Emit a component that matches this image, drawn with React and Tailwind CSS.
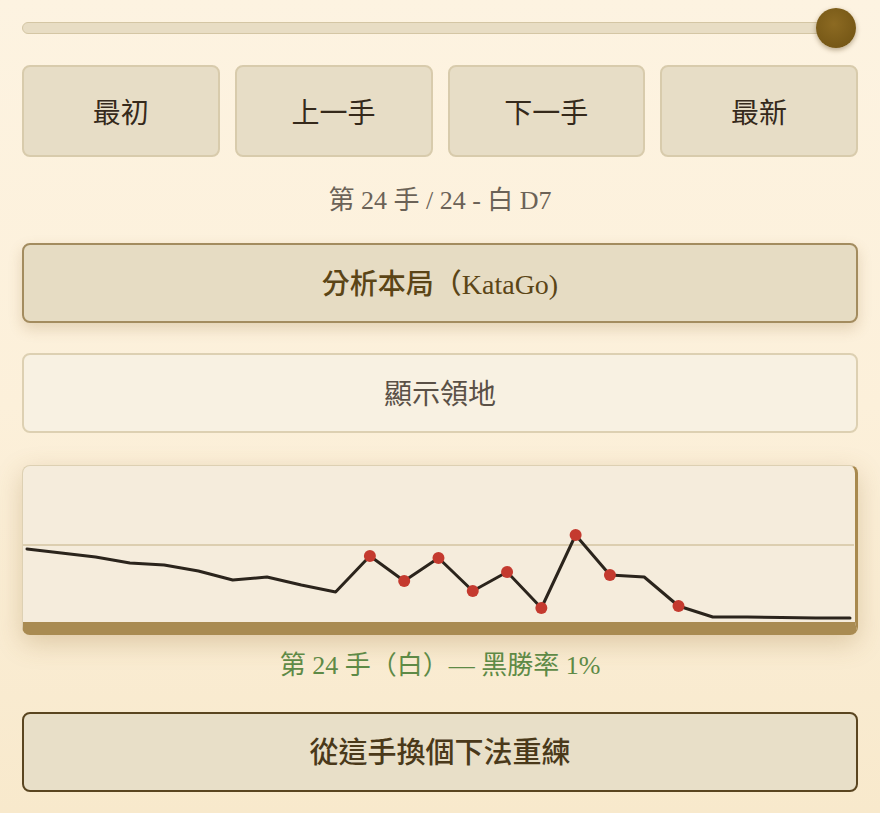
import React from "react";

const FONT = { fontFamily: '"Liberation Serif", "Noto Sans CJK TC", serif' };

const ys = [83, 87, 91, 97, 99, 105, 114, 111, 119, 126, 90, 115, 92, 125, 106, 142, 69, 109, 111, 140, 151, 151, 151.5, 152, 152];
const red = new Set([10, 11, 12, 13, 14, 15, 16, 17, 19]);

function Chart() {
  const pts = ys.map((y, i) => [4 + i * 34.29, y]);
  const d = pts.map((p, i) => (i ? "L" : "M") + p[0].toFixed(1) + " " + p[1]).join(" ");
  return (
    <svg width="831" height="156" viewBox="0 0 831 156" className="block">
      <line x1="0" y1="79" x2="831" y2="79" stroke="#d3c4a2" strokeWidth="1.5" />
      <path d={d} fill="none" stroke="#2b241c" strokeWidth="3" strokeLinejoin="round" strokeLinecap="round" />
      {pts.map((p, i) =>
        red.has(i) ? <circle key={i} cx={p[0]} cy={p[1]} r="6" fill="#c43a2f" /> : null
      )}
    </svg>
  );
}

export default function App() {
  const navs = ["最初", "上一手", "下一手", "最新"];
  return (
    <div
      className="min-h-[813px] w-full px-[22px] pt-[8px] bg-gradient-to-b from-[#fdf3e1] via-[#fcf0da] to-[#f8e9cc]"
      style={FONT}
    >
      {/* slider */}
      <div className="relative h-[40px] flex items-center">
        <div className="h-[12px] w-[828px] rounded-full bg-[#e8ddc4] border border-[#d4c6a4]" />
        <div className="absolute right-[2px] top-0 h-[40px] w-[40px] rounded-full bg-[radial-gradient(circle_at_45%_40%,#8c6a22,#6e5112)] shadow-[0_2px_5px_rgba(80,55,10,0.4)]" />
      </div>

      {/* nav buttons */}
      <div className="mt-[17px] grid grid-cols-4 gap-[15px]">
        {navs.map((t) => (
          <div
            key={t}
            className="h-[92px] pt-[5px] rounded-[8px] bg-[#e7ddc6] border-2 border-[#d8cbac] flex items-center justify-center text-[28px] text-[#35291b]"
          >
            {t}
          </div>
        ))}
      </div>

      <div className="mt-[27px] h-[34px] leading-[34px] text-center text-[26px] text-[#6b6257]">
        第 24 手 / 24 - 白 D7
      </div>

      <div className="mt-[25px] h-[80px] pt-[4px] rounded-[8px] bg-[#e6dcc3] border-2 border-[#a38c5f] shadow-[0_6px_14px_rgba(140,105,45,0.22)] flex items-center justify-center text-[28px] font-medium text-[#5b4516]">
        分析本局（KataGo)
      </div>

      <div className="mt-[30px] h-[80px] pt-[4px] rounded-[8px] bg-[#f8f1e2] border-2 border-[#ddd0b2] flex items-center justify-center text-[28px] text-[#5a5046]">
        顯示領地
      </div>

      <div className="mt-[32px] h-[170px] rounded-[8px] bg-[#f5ecdc] border-t border-l border-[#ddd0b3] border-r-[3px] border-r-[#a8894e] border-b-[13px] border-b-[#a98b52] shadow-[0_8px_26px_rgba(150,110,50,0.28)] overflow-hidden">
        <Chart />
      </div>

      <div className="mt-[14px] h-[34px] leading-[34px] text-center text-[26px] text-[#5e8a46]">
        第 24 手（白）— 黑勝率 1%
      </div>

      <div className="mt-[29px] h-[80px] pt-[4px] rounded-[8px] bg-[#e8dfc8] border-2 border-[#5a4520] flex items-center justify-center text-[29px] font-medium text-[#4a391a]">
        從這手換個下法重練
      </div>
    </div>
  );
}
